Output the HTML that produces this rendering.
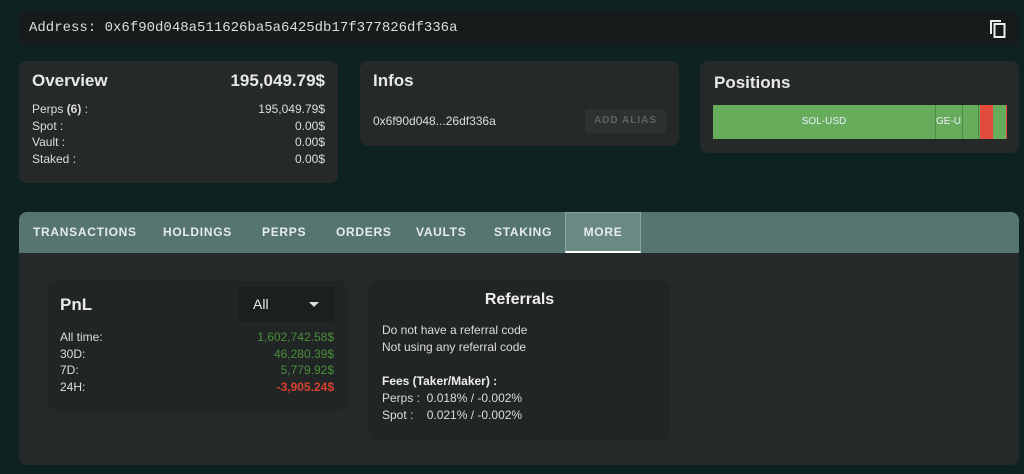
<!DOCTYPE html>
<html><head><style>
*{box-sizing:border-box;margin:0;padding:0}
body{width:1024px;height:474px;background:#0e2220;font-family:"Liberation Sans",sans-serif;color:#e8e8e8;position:relative;overflow:hidden}
.abs{position:absolute}
.card{position:absolute;background:#25292a;border-radius:8px}
.addr{left:19px;top:12px;width:1000px;height:33px;background:#171b1b;border-radius:4px;font-family:"Liberation Mono",monospace;font-size:14px;padding:8px 10px;color:#ddd}
.row{display:flex;justify-content:space-between;font-size:12px;line-height:16.5px;color:#ddd}
.tabs{left:19px;top:212px;width:1000px;height:41px;background:#56756f;border-radius:8px 8px 0 0}
.tab{position:absolute;top:0;height:41px;line-height:41px;font-size:12px;font-weight:bold;letter-spacing:0.7px;color:#e6ecea}
</style></head><body>
<div class="abs addr">Address: 0x6f90d048a511626ba5a6425db17f377826df336a</div>
<svg class="abs" style="left:988px;top:18px" width="20" height="22" viewBox="0 0 20 22"><path d="M3 16V3h10" fill="none" stroke="#eee" stroke-width="2"/><rect x="6.5" y="6" width="10" height="13" fill="none" stroke="#eee" stroke-width="2"/></svg>

<div class="card" style="left:19px;top:61px;width:319px;height:122px;padding:10px 13px">
 <div style="display:flex;justify-content:space-between;font-size:17px;font-weight:bold;height:30px"><span>Overview</span><span>195,049.79$</span></div>
 <div class="row"><span>Perps <b>(6)</b> :</span><span>195,049.79$</span></div>
 <div class="row"><span>Spot :</span><span>0.00$</span></div>
 <div class="row"><span>Vault :</span><span>0.00$</span></div>
 <div class="row"><span>Staked :</span><span>0.00$</span></div>
</div>

<div class="card" style="left:360px;top:61px;width:319px;height:85px;padding:10px 13px">
 <div style="font-size:17px;font-weight:bold">Infos</div>
 <div class="abs" style="left:13px;top:53px;font-size:12px;color:#ddd">0x6f90d048...26df336a</div>
 <div class="abs" style="left:225px;top:48px;width:81px;height:24px;background:#2b3231;border-radius:3px;font-size:10px;font-weight:bold;letter-spacing:1px;color:#5b6664;text-align:center;line-height:24px">ADD ALIAS</div>
</div>

<div class="card" style="left:700px;top:61px;width:319px;height:92px;padding:12px 14px">
 <div style="font-size:17px;font-weight:bold">Positions</div>
 <div class="abs" style="left:13px;top:44px;width:294px;height:34px;background:#66ac5b">
  <div class="abs" style="left:0;width:222px;height:34px;text-align:center;line-height:34px;font-size:10px;color:#eef">SOL-USD</div>
  <div class="abs" style="left:222px;width:1px;height:34px;background:#4e8a46"></div>
  <div class="abs" style="left:223px;width:26px;height:34px;line-height:34px;font-size:10px;overflow:hidden;color:#eef;direction:rtl;text-align:left">GE-U</div>
  <div class="abs" style="left:249px;width:1px;height:34px;background:#4e8a46"></div>
  <div class="abs" style="left:265px;width:1px;height:34px;background:#4e8a46"></div>
  <div class="abs" style="left:267px;width:13px;height:34px;background:#e04b3c"></div>
  <div class="abs" style="left:293px;width:1px;height:34px;background:#e04b3c"></div>
 </div>
</div>

<div class="abs" style="left:19px;top:212px;width:1000px;height:253px;background:#25292a;border-radius:8px"></div>
<div class="abs tabs">
 <div class="tab" style="left:14px">TRANSACTIONS</div>
 <div class="tab" style="left:144px">HOLDINGS</div>
 <div class="tab" style="left:243px">PERPS</div>
 <div class="tab" style="left:317px">ORDERS</div>
 <div class="tab" style="left:397px">VAULTS</div>
 <div class="tab" style="left:475px">STAKING</div>
 <div class="tab" style="left:546px;width:76px;background:#6b8a84;border:1px solid #8aa59f;border-bottom:2px solid #fff;text-align:center;line-height:39px">MORE</div>
</div>

<div class="card" style="left:47px;top:281px;width:300px;height:129px;background:#222526;padding:0 13px">
 <div class="abs" style="left:13px;top:14px;font-size:17px;font-weight:bold">PnL</div>
 <div class="abs" style="left:192px;top:6px;width:95px;height:35px;background:#1c1f1f;border-radius:3px;font-size:14px;padding:9px 14px">All<span style="position:absolute;left:70px;top:15px;border:5px solid transparent;border-top-color:#ddd"></span></div>
 <div style="position:absolute;left:13px;right:13px;top:48px">
 <div class="row"><span>All time:</span><span style="color:#4a8f3a">1,602,742.58$</span></div>
 <div class="row"><span>30D:</span><span style="color:#4a8f3a">46,280.39$</span></div>
 <div class="row"><span>7D:</span><span style="color:#4a8f3a">5,779.92$</span></div>
 <div class="row"><span>24H:</span><span style="color:#d8402f;font-weight:bold">-3,905.24$</span></div>
 </div>
</div>

<div class="card" style="left:369px;top:281px;width:301px;height:159px;background:#222526;padding:10px 13px;font-size:12px;line-height:17px;color:#ddd">
 <div style="text-align:center;font-size:16px;font-weight:bold;color:#eee;margin-bottom:14px">Referrals</div>
 <div>Do not have a referral code</div>
 <div>Not using any referral code</div>
 <div style="height:17px"></div>
 <div style="font-weight:bold;color:#eee">Fees (Taker/Maker) :</div>
 <div>Perps :&nbsp; 0.018% / -0.002%</div>
 <div>Spot :&nbsp;&nbsp;&nbsp; 0.021% / -0.002%</div>
</div>
</body></html>
